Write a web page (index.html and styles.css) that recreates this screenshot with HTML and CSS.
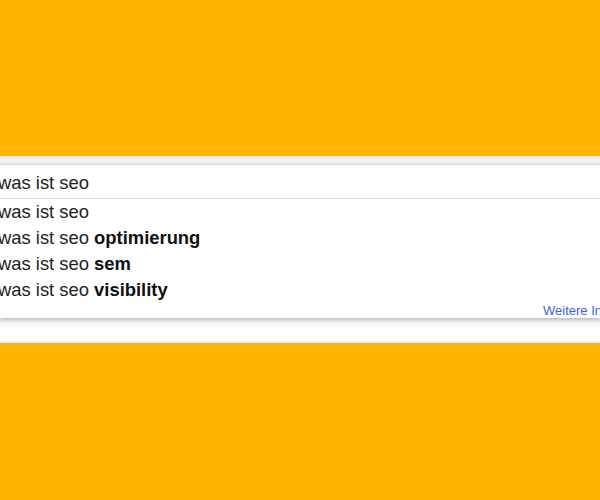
FILE: index.html
```html
<!DOCTYPE html>
<html lang="de">
<head>
<meta charset="utf-8">
<title>was ist seo</title>
<link rel="stylesheet" href="styles.css">
</head>
<body>
<div class="page">
  <div class="top"></div>
  <div class="band"></div>
  <div class="search">
    <div class="input">was ist seo</div>
    <div class="menu">
      <ul class="suggestions">
        <li>was ist seo</li>
        <li>was ist seo <b>optimierung</b></li>
        <li>was ist seo <b>sem</b></li>
        <li>was ist seo <b>visibility</b></li>
      </ul>
      <div class="more"><a href="#">Weitere Informationen</a></div>
    </div>
  </div>
  <div class="under"></div>
  <div class="bottom"></div>
</div>
</body>
</html>
```
FILE: styles.css
```css
html, body {
  margin: 0;
  padding: 0;
  background: #ffb400;
  overflow: hidden;
}
.page {
  width: 600px;
  height: 500px;
  display: flex;
  flex-direction: column;
  font-family: "Liberation Sans", Arial, sans-serif;
}
.top {
  height: 156px;
  background: #ffb400;
}
.band {
  height: 8px;
  background: #f1f1f1;
}
.search {
  background: #fff;
  position: relative;
  z-index: 1;
  box-shadow: 0 2px 4px rgba(0, 0, 0, 0.22);
}
.input {
  border-top: 1px solid #d6d6d6;
  border-bottom: 1px solid #dcdcdc;
  height: 22px;
  padding: 7px 0 4px 0;
  margin-left: -2px;
  font-size: 18.4px;
  line-height: 22px;
  color: #222;
  white-space: nowrap;
}
.menu {
  height: 119px;
}
.suggestions {
  list-style: none;
  margin: 0;
  padding: 0;
  margin-left: -2px;
}
.suggestions li {
  font-size: 18.4px;
  line-height: 26px;
  height: 26px;
  color: #222;
  white-space: nowrap;
}
.suggestions b {
  color: #111;
  font-weight: bold;
}
.more {
  padding-left: 543px;
  padding-top: 1px;
  width: 300px;
  font-size: 13px;
  line-height: 14px;
  white-space: nowrap;
}
.more a {
  color: #3e63cf;
  text-decoration: none;
}
.under {
  height: 23px;
  background: linear-gradient(#ececec, #fbfbfb 8px, #fff 14px);
  border-bottom: 2px solid #efefef;
}
.bottom {
  flex: 1;
  background: #ffb400;
}
```
